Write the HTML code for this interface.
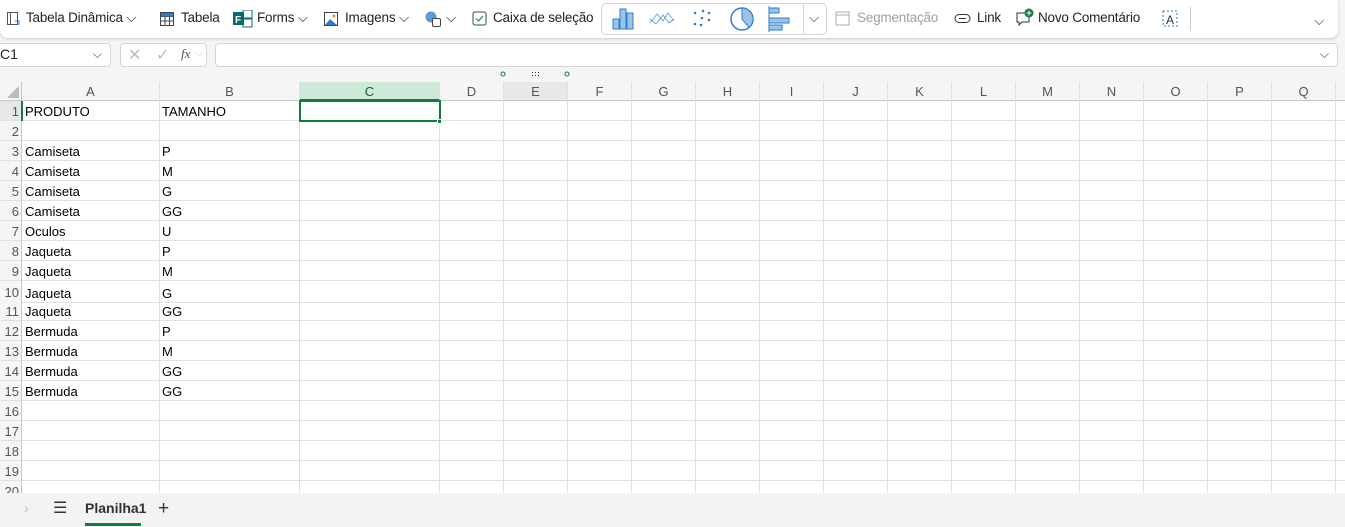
<!DOCTYPE html>
<html><head><meta charset="utf-8"><style>
*{box-sizing:border-box;margin:0;padding:0}
body{width:1345px;height:527px;overflow:hidden;background:#f5f5f5;font-family:"Segoe UI","Liberation Sans",sans-serif;color:#242424;position:relative}
.rib{position:absolute;left:0;top:0;width:1338px;height:38px;background:#fff;border-radius:0 0 8px 8px;box-shadow:0 1px 3px rgba(0,0,0,.18)}
.it{position:absolute;top:10px;font-size:13.5px;letter-spacing:-0.2px;white-space:nowrap}
.ic{position:absolute}
.fb{position:absolute;top:43px;height:24px;background:#fff;border:1px solid #d6d6d6;border-radius:4px}
.grid{position:absolute;left:0;top:82px;width:1345px;height:411px;background:#fff;overflow:hidden}
.ch{position:absolute;top:0;height:19px;border-right:1px solid #e1e1e1;border-bottom:1px solid #c8c8c8;background:#f5f5f5;text-align:center;font-size:13px;color:#555;line-height:20px}
.rh{position:absolute;left:0;width:22px;border-bottom:1px solid #e1e1e1;border-right:1px solid #c8c8c8;background:#f5f5f5;text-align:right;padding-right:2px;font-size:13px;color:#555;line-height:21px;height:20px}
.vl{position:absolute;top:19px;width:1px;height:400px;background:#e1e1e1}
.hl{position:absolute;left:22px;right:0;height:1px;background:#e1e1e1}
.c{position:absolute;font-size:13px;color:#000;line-height:21px;height:20px}
.tabs{position:absolute;left:0;top:493px;width:1345px;height:34px;background:#f3f3f3}
</style></head><body>
<div class="rib">
<svg class="ic" style="left:6px;top:11px" width="16" height="16"><rect x="1.5" y="1.5" width="10" height="12" fill="none" stroke="#555"/><line x1="4.5" y1="2" x2="4.5" y2="13" stroke="#555"/><path d="M9 10 l4 0 l0 4" stroke="#2b7cd3" fill="none"/></svg>
<div class="it" style="left:26px">Tabela Dinâmica ⌵</div>
<svg class="ic" style="left:159px;top:11px" width="16" height="16"><rect x="1.5" y="1.5" width="13" height="13" fill="none" stroke="#444"/><path d="M1.5 5.5h13M1.5 10h13M6 5.5v9M10.5 5.5v9" stroke="#444"/><rect x="2" y="2" width="12" height="3.5" fill="#2b7cd3"/></svg>
<div class="it" style="left:181px">Tabela</div>
<svg class="ic" style="left:233px;top:10px" width="20" height="18"><rect x="0" y="2" width="11" height="13" fill="#036c70"/><rect x="10" y="0" width="9" height="8" fill="none" stroke="#036c70"/><rect x="10" y="9" width="9" height="8" fill="none" stroke="#036c70"/><text x="2" y="13" font-size="10" fill="#fff" font-weight="bold" font-family="Liberation Sans">F</text></svg>
<div class="it" style="left:257px">Forms ⌵</div>
<svg class="ic" style="left:323px;top:11px" width="16" height="16"><rect x="1.5" y="1.5" width="13" height="13" fill="none" stroke="#444"/><path d="M2 14l5-6 7 6z" fill="#2b7cd3"/><circle cx="11" cy="5" r="1.5" fill="#e8912d"/></svg>
<div class="it" style="left:345px">Imagens ⌵</div>
<svg class="ic" style="left:424px;top:10px" width="18" height="18"><circle cx="7" cy="7" r="5.5" fill="#5b9bd5"/><rect x="8.5" y="8.5" width="8" height="8" rx="1.5" fill="#fff" stroke="#444"/></svg>
<div class="it" style="left:446px">⌵</div>
<svg class="ic" style="left:472px;top:11px" width="15" height="15"><rect x="1" y="1" width="13" height="13" rx="2" fill="none" stroke="#444"/><path d="M4 7.5l2.5 2.5 4.5-5" stroke="#107c41" fill="none"/></svg>
<div class="it" style="left:493px">Caixa de seleção</div>
<div style="position:absolute;left:601px;top:3px;width:226px;height:32px;border:1px solid #d6d6d6;border-radius:5px;background:#fff"></div>
<div style="position:absolute;left:803px;top:4px;width:1px;height:30px;background:#d6d6d6"></div>
<svg class="ic" style="left:612px;top:7px" width="24" height="24"><rect x="1" y="12" width="6" height="10" fill="#9cc3e6" stroke="#2b7cd3"/><rect x="8" y="2" width="6" height="20" fill="#9cc3e6" stroke="#2b7cd3"/><rect x="15" y="6" width="6" height="16" fill="#9cc3e6" stroke="#2b7cd3"/></svg>
<svg class="ic" style="left:649px;top:9px" width="26" height="18"><path d="M1 14l7-9 6 7 5-8 6 8M1 10l6 5 7-9 6 8 5-4" stroke="#6fa8dc" fill="none"/></svg>
<svg class="ic" style="left:690px;top:8px" width="24" height="22"><g fill="#2b7cd3"><circle cx="5" cy="5" r="1.3"/><circle cx="13" cy="3" r="1.3"/><circle cx="19" cy="5" r="1.3"/><circle cx="12" cy="10" r="1.3"/><circle cx="19" cy="12" r="1.3"/><circle cx="5" cy="16" r="1.3"/><circle cx="11" cy="17" r="1.3"/></g></svg>
<svg class="ic" style="left:729px;top:6px" width="26" height="26"><circle cx="13" cy="13" r="11" fill="#fff" stroke="#2b7cd3" stroke-width="1.5"/><path d="M13 2a11 11 0 0 1 7 19.5L13 13z" fill="#9cc3e6" stroke="#2b7cd3"/></svg>
<svg class="ic" style="left:768px;top:6px" width="26" height="26"><rect x="1" y="2" width="10" height="5" fill="#9cc3e6" stroke="#2b7cd3"/><rect x="1" y="12" width="20" height="5" fill="#9cc3e6" stroke="#2b7cd3"/><rect x="1" y="19" width="13" height="5" fill="#9cc3e6" stroke="#2b7cd3"/><line x1="1" y1="0" x2="1" y2="26" stroke="#2b7cd3"/></svg>
<div class="it" style="left:809px;color:#444">⌵</div>
<svg class="ic" style="left:835px;top:11px" width="16" height="16"><rect x="1" y="1" width="13" height="13" fill="none" stroke="#aaa"/><path d="M1 4h13" stroke="#aaa"/></svg>
<div class="it" style="left:857px;color:#a0a0a0">Segmentação</div>
<svg class="ic" style="left:954px;top:13px" width="18" height="12"><rect x="1" y="1.5" width="15" height="8" rx="4" fill="none" stroke="#333"/><line x1="5" y1="5.5" x2="12" y2="5.5" stroke="#333"/></svg>
<div class="it" style="left:977px">Link</div>
<svg class="ic" style="left:1015px;top:8px" width="20" height="20"><path d="M2 5h12v9H7l-3 3v-3H2z" fill="none" stroke="#333"/><circle cx="14" cy="5" r="4.5" fill="#107c41"/><path d="M14 2.5v5M11.5 5h5" stroke="#fff"/></svg>
<div class="it" style="left:1038px">Novo Comentário</div>
<svg class="ic" style="left:1161px;top:9px" width="18" height="20"><rect x="2" y="2" width="14" height="15" fill="none" stroke="#2b7cd3" stroke-dasharray="2 2"/><text x="5" y="15" font-size="12" fill="#333" font-family="Liberation Sans">A</text></svg>
<div style="position:absolute;left:1190px;top:7px;width:1px;height:24px;background:#ccc"></div>
<div class="it" style="left:1314px;top:13px;color:#444">⌵</div>
</div>
<div class="fb" style="left:-5px;width:116px"><span style="position:absolute;left:4px;top:2px;font-size:14px">C1</span><span style="position:absolute;right:8px;top:3px;font-size:12px;color:#444">⌵</span></div>
<div class="fb" style="left:120px;width:87px;color:#bbb"><span style="position:absolute;left:7px;top:1px;font-size:16px">✕</span><span style="position:absolute;left:35px;top:1px;font-size:16px">✓</span><span style="position:absolute;left:60px;top:2px;font-size:13px;color:#555;font-style:italic;font-family:'Liberation Serif'">fx</span><span style="position:absolute;left:75px;top:4px;font-size:9px">⌵</span></div>
<div class="fb" style="left:215px;width:1123px"><span style="position:absolute;right:8px;top:3px;font-size:12px;color:#444">⌵</span></div>
<svg style="position:absolute;left:500px;top:70px" width="80" height="10"><circle cx="3" cy="4" r="2" fill="none" stroke="#107c41"/><circle cx="67" cy="4" r="2" fill="none" stroke="#107c41"/><g fill="#333"><rect x="32" y="2" width="1" height="1"/><rect x="35" y="2" width="1" height="1"/><rect x="38" y="2" width="1" height="1"/><rect x="32" y="5" width="1" height="1"/><rect x="35" y="5" width="1" height="1"/><rect x="38" y="5" width="1" height="1"/></g></svg>
<div class="grid" id="g"></div>
<div class="tabs">
<span style="position:absolute;left:24px;top:7px;color:#bbb;font-size:14px">›</span>
<span style="position:absolute;left:53px;top:5px;font-size:16px;color:#333">☰</span>
<span style="position:absolute;left:85px;top:7px;font-size:14px;font-weight:bold;color:#333">Planilha1</span>
<div style="position:absolute;left:85px;top:30px;width:56px;height:3px;background:#107c41"></div>
<span style="position:absolute;left:158px;top:5px;font-size:19px;color:#333">+</span>
</div>
<script>
var g=document.getElementById('g'),h='';
var cols=[["A",22,160],["B",160,300],["C",300,440]];var L="DEFGHIJKLMNOPQR".split(""),x=440;
for(var i=0;i<L.length;i++){cols.push([L[i],x,x+64]);x+=64;}
h+='<div class="ch" style="left:0;width:22px;border-right:1px solid #c8c8c8"><svg width="20" height="18" style="position:absolute;left:2px;top:0"><path d="M17 4v12H5z" fill="#bbb"/></svg></div>';
cols.forEach(function(c){var s=c[0]=="C"?'background:#cfe9d9;color:#0e5c2f;border-bottom:2px solid #107c41;':(c[0]=="E"?'background:#e8e8e8;':'');h+='<div class="ch" style="left:'+c[1]+'px;width:'+(c[2]-c[1])+'px;'+s+'">'+c[0]+'</div>';h+='<div class="vl" style="left:'+(c[2]-1)+'px"></div>';});
var d=[["PRODUTO","TAMANHO"],["",""],["Camiseta","P"],["Camiseta","M"],["Camiseta","G"],["Camiseta","GG"],["Oculos","U"],["Jaqueta","P"],["Jaqueta","M"],["Jaqueta","G"],["Jaqueta","GG"],["Bermuda","P"],["Bermuda","M"],["Bermuda","GG"],["Bermuda","GG"]];
for(var r=1;r<=20;r++){var y=19+(r-1)*20;var hh=r==10?22:20;if(r>10)y+=2;if(r==11)hh=19;if(r>10)y-=1;if(r>11)y-=1;
h+='<div class="rh" style="top:'+y+'px;height:'+hh+'px;line-height:'+(hh+1)+'px;'+(r==1?'color:#107c41;background:#e8e8e8':'')+'">'+r+'</div>';
h+='<div class="hl" style="top:'+(y+hh-1)+'px"></div>';
if(d[r-1]){h+='<div class="c" style="left:25px;top:'+(y+hh-20)+'px">'+d[r-1][0]+'</div><div class="c" style="left:162px;top:'+(y+hh-20)+'px">'+d[r-1][1]+'</div>';}}
h+='<div style="position:absolute;left:21px;top:19px;width:2px;height:20px;background:#107c41"></div>';
h+='<div style="position:absolute;left:299px;top:18px;width:142px;height:22px;border:2px solid #107c41"></div><div style="position:absolute;left:437px;top:37px;width:5px;height:5px;background:#107c41;border:1px solid #fff"></div>';
g.innerHTML=h;
</script>
</body></html>
